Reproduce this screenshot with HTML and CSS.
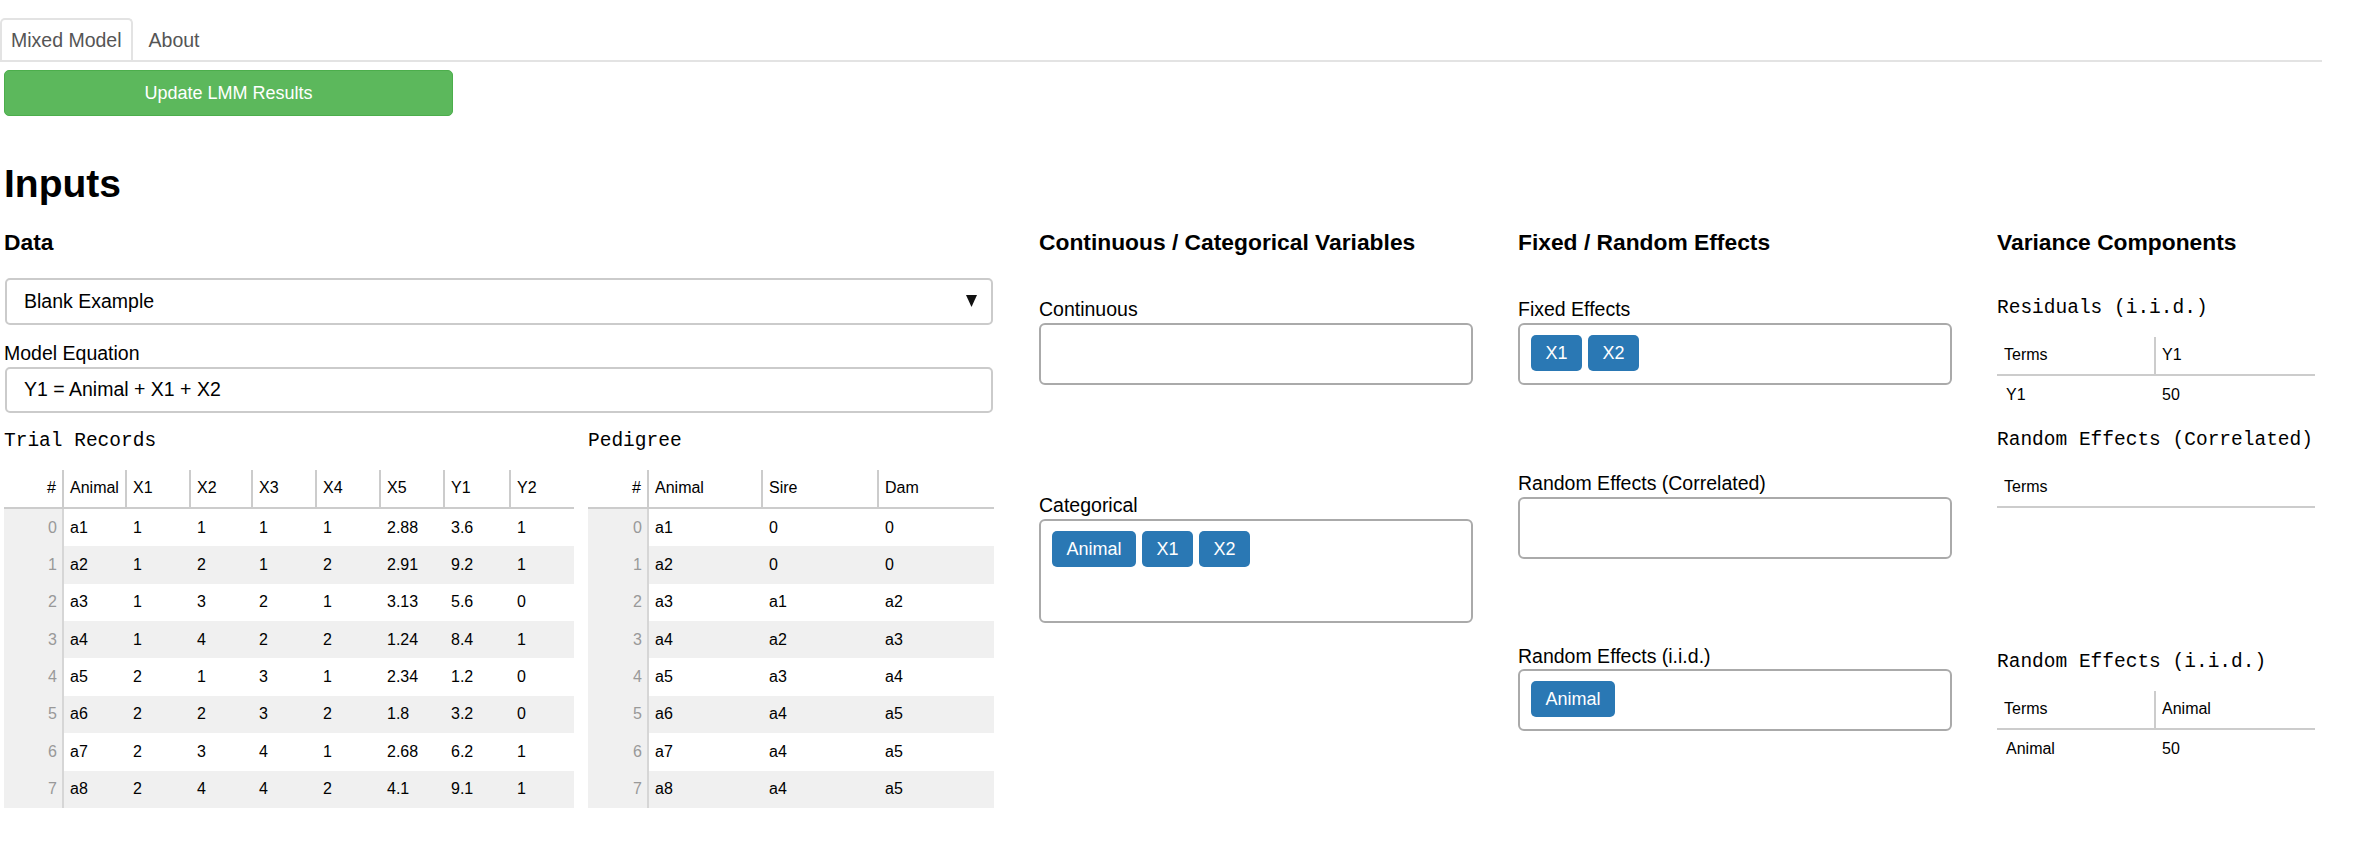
FILE: index.html
```html
<!DOCTYPE html>
<html lang="en">
<head>
<meta charset="utf-8">
<title>Mixed Model</title>
<link rel="stylesheet" href="styles.css">
</head>
<body>
<nav class="tabs">
  <div class="tab active">Mixed Model</div>
  <div class="tab">About</div>
</nav>
<main class="page">
  <button class="update-btn" type="button">Update LMM Results</button>
  <h1 class="title">Inputs</h1>
  <div class="inputs-grid">
    <section class="col">
      <h3 class="col-title">Data</h3>
      <div class="select">
        <span>Blank Example</span>
        <svg class="caret" width="11" height="12" viewBox="0 0 11 12"><polygon points="0,0 11,0 5.5,12" fill="#111"/></svg>
      </div>
      <div class="field-label eq-label">Model Equation</div>
      <div class="text-input">Y1 = Animal + X1 + X2</div>
      <div class="tables">
        <div class="tbl-block">
          <div class="caption">Trial Records</div>
          <table class="dt trial">
            <thead>
              <tr>
                <th class="idx w58">#</th><th class="w63">Animal</th><th class="w64">X1</th><th class="w62">X2</th><th class="w64">X3</th><th class="w64">X4</th><th class="w64">X5</th><th class="w66">Y1</th><th class="w65">Y2</th>
              </tr>
            </thead>
            <tbody>
              <tr><td class="idx">0</td><td class="first">a1</td><td>1</td><td>1</td><td>1</td><td>1</td><td>2.88</td><td>3.6</td><td>1</td></tr>
              <tr class="odd"><td class="idx">1</td><td class="first">a2</td><td>1</td><td>2</td><td>1</td><td>2</td><td>2.91</td><td>9.2</td><td>1</td></tr>
              <tr><td class="idx">2</td><td class="first">a3</td><td>1</td><td>3</td><td>2</td><td>1</td><td>3.13</td><td>5.6</td><td>0</td></tr>
              <tr class="odd"><td class="idx">3</td><td class="first">a4</td><td>1</td><td>4</td><td>2</td><td>2</td><td>1.24</td><td>8.4</td><td>1</td></tr>
              <tr><td class="idx">4</td><td class="first">a5</td><td>2</td><td>1</td><td>3</td><td>1</td><td>2.34</td><td>1.2</td><td>0</td></tr>
              <tr class="odd"><td class="idx">5</td><td class="first">a6</td><td>2</td><td>2</td><td>3</td><td>2</td><td>1.8</td><td>3.2</td><td>0</td></tr>
              <tr><td class="idx">6</td><td class="first">a7</td><td>2</td><td>3</td><td>4</td><td>1</td><td>2.68</td><td>6.2</td><td>1</td></tr>
              <tr class="odd"><td class="idx">7</td><td class="first">a8</td><td>2</td><td>4</td><td>4</td><td>2</td><td>4.1</td><td>9.1</td><td>1</td></tr>
            </tbody>
          </table>
        </div>
        <div class="tbl-block">
          <div class="caption">Pedigree</div>
          <table class="dt pedigree">
            <thead>
              <tr><th class="idx w59">#</th><th class="w114">Animal</th><th class="w116">Sire</th><th class="w117">Dam</th></tr>
            </thead>
            <tbody>
              <tr><td class="idx">0</td><td class="first">a1</td><td>0</td><td>0</td></tr>
              <tr class="odd"><td class="idx">1</td><td class="first">a2</td><td>0</td><td>0</td></tr>
              <tr><td class="idx">2</td><td class="first">a3</td><td>a1</td><td>a2</td></tr>
              <tr class="odd"><td class="idx">3</td><td class="first">a4</td><td>a2</td><td>a3</td></tr>
              <tr><td class="idx">4</td><td class="first">a5</td><td>a3</td><td>a4</td></tr>
              <tr class="odd"><td class="idx">5</td><td class="first">a6</td><td>a4</td><td>a5</td></tr>
              <tr><td class="idx">6</td><td class="first">a7</td><td>a4</td><td>a5</td></tr>
              <tr class="odd"><td class="idx">7</td><td class="first">a8</td><td>a4</td><td>a5</td></tr>
            </tbody>
          </table>
        </div>
      </div>
    </section>

    <section class="col">
      <h3 class="col-title">Continuous / Categorical Variables</h3>
      <div class="field first-field">
        <div class="field-label">Continuous</div>
        <div class="box"></div>
      </div>
      <div class="field categorical-field">
        <div class="field-label">Categorical</div>
        <div class="box tall">
          <span class="chip">Animal</span><span class="chip">X1</span><span class="chip">X2</span>
        </div>
      </div>
    </section>

    <section class="col">
      <h3 class="col-title">Fixed / Random Effects</h3>
      <div class="field first-field">
        <div class="field-label">Fixed Effects</div>
        <div class="box"><span class="chip">X1</span><span class="chip">X2</span></div>
      </div>
      <div class="field corr-field">
        <div class="field-label">Random Effects (Correlated)</div>
        <div class="box"></div>
      </div>
      <div class="field iid-field">
        <div class="field-label">Random Effects (i.i.d.)</div>
        <div class="box"><span class="chip">Animal</span></div>
      </div>
    </section>

    <section class="col">
      <h3 class="col-title">Variance Components</h3>
      <div class="caption vc-cap1">Residuals (i.i.d.)</div>
      <table class="vt">
        <thead><tr><th class="w157">Terms</th><th class="w161">Y1</th></tr></thead>
        <tbody><tr><td>Y1</td><td>50</td></tr></tbody>
      </table>
      <div class="caption vc-cap2">Random Effects (Correlated)</div>
      <table class="vt">
        <thead><tr><th class="w318">Terms</th></tr></thead>
      </table>
      <div class="caption vc-cap3">Random Effects (i.i.d.)</div>
      <table class="vt">
        <thead><tr><th class="w157">Terms</th><th class="w161">Animal</th></tr></thead>
        <tbody><tr><td>Animal</td><td>50</td></tr></tbody>
      </table>
    </section>
  </div>
</main>
</body>
</html>
```

FILE: styles.css
```css
body {
  margin: 0;
  font-family: "Liberation Sans", Arial, Helvetica, sans-serif;
  font-size: 19.5px;
  color: #000;
  background: #fff;
}

/* tabs */
.tabs {
  display: flex;
  width: 2322px;
  height: 42px;
  padding-top: 18px;
  border-bottom: 2px solid #e3e3e3;
}
.tab {
  border: 2px solid transparent;
  border-bottom: 0;
  border-radius: 5px 5px 0 0;
  padding: 0 14px;
  line-height: 40px;
  color: #555;
}
.tab.active {
  border-color: #e3e3e3;
  padding: 0 9px;
  background: #fff;
}

.page {
  padding: 0 4px;
}

.update-btn {
  display: block;
  margin-top: 8px;
  width: 449px;
  height: 46px;
  padding: 0;
  background: #5cb85c;
  border: 1px solid #4cae4c;
  border-radius: 5px;
  color: #fff;
  font-family: inherit;
  font-size: 18px;
}

.title {
  margin: 46px 0 0;
  font-size: 39px;
  line-height: 1.15;
  font-weight: bold;
}

.inputs-grid {
  display: grid;
  grid-template-columns: 990px 434px 434px 324px;
  column-gap: 45px;
  margin-top: 22px;
  align-items: start;
}

.col-title {
  margin: 0;
  font-size: 22.8px;
  line-height: 1.15;
  font-weight: bold;
}

/* data column */
.select {
  margin-top: 22.8px;
  margin-left: 1px;
  width: 988px;
  height: 47px;
  box-sizing: border-box;
  border: 2px solid #cbcbcb;
  border-radius: 5px;
  display: flex;
  align-items: center;
  justify-content: space-between;
  padding: 0 14px 0 17px;
}
.caret {
  display: block;
}

.field-label {
  line-height: 22.4px;
}
.eq-label {
  margin-top: 17px;
}
.text-input {
  margin-top: 2.6px;
  margin-left: 1px;
  width: 988px;
  height: 46px;
  box-sizing: border-box;
  border: 2px solid #cbcbcb;
  border-radius: 5px;
  padding: 0 17px;
  display: flex;
  align-items: center;
}

.tables {
  display: flex;
  gap: 14px;
  margin-top: 17.6px;
  align-items: flex-start;
}

.caption {
  font-family: "Liberation Mono", "Courier New", monospace;
  font-size: 19.5px;
  line-height: 22.4px;
  margin-bottom: 17px;
}

/* data tables */
.dt, .vt {
  border-collapse: separate;
  border-spacing: 0;
  table-layout: fixed;
  font-size: 16px;
}
.trial { width: 570px; }
.pedigree { width: 406px; }
.vt { width: 318px; }

.dt th, .dt td, .vt th, .vt td {
  box-sizing: border-box;
  padding: 0 6px;
  text-align: left;
  font-weight: normal;
  white-space: nowrap;
}
.dt th, .vt th {
  height: 39px;
  border-bottom: 2px solid #cccccc;
  border-left: 2px solid #cccccc;
}
.dt td, .vt td {
  height: 37.4px;
  border-left: 2px solid transparent;
}
.dt th.idx {
  border-left: 0;
  text-align: right;
  padding-right: 6px;
}
.dt td.idx {
  border-left: 0;
  text-align: right;
  padding-right: 5px;
  background: #f0f0f0;
  color: #999;
}
.dt td.first {
  border-left-color: #d6d6d6;
}
.dt tr.odd td {
  background: #f0f0f0;
}

.vt th:first-child {
  border-left: 0;
  padding-left: 7px;
}
.vt td:first-child {
  border-left: 0;
  padding-left: 9px;
}

.w58 { width: 58px; }
.w59 { width: 59px; }
.w62 { width: 62px; }
.w63 { width: 63px; }
.w64 { width: 64px; }
.w65 { width: 65px; }
.w66 { width: 66px; }
.w114 { width: 114px; }
.w116 { width: 116px; }
.w117 { width: 117px; }
.w157 { width: 157px; }
.w161 { width: 161px; }
.w318 { width: 318px; }

/* effect boxes */
.box {
  margin-top: 2px;
  border: 2px solid #aaaaaa;
  border-radius: 6px;
  padding: 10px 11px;
  min-height: 38px;
  display: flex;
  flex-wrap: wrap;
  align-items: flex-start;
  gap: 6px;
}
.box.tall {
  min-height: 80px;
}
.chip {
  height: 36px;
  line-height: 36px;
  padding: 0 14.5px;
  background: #2a78b4;
  color: #fff;
  border-radius: 5px;
  font-size: 18px;
}

.first-field { margin-top: 43.4px; }
.categorical-field { margin-top: 109.6px; }
.corr-field { margin-top: 87.6px; }
.iid-field { margin-top: 86px; }

/* variance column */
.vc-cap1 { margin-top: 42.4px; }
.vc-cap2 { margin-top: 16.2px; }
.vc-cap3 { margin-top: 143.6px; }
```
